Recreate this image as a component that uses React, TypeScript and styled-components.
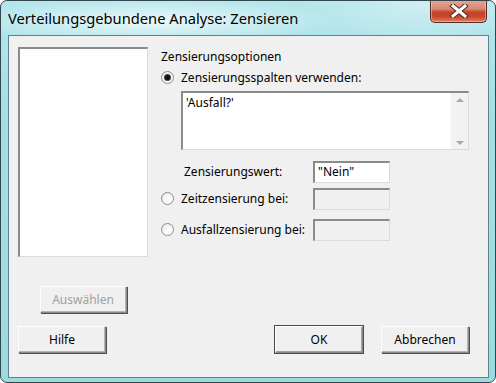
import * as React from 'react'
import styled, { createGlobalStyle } from 'styled-components'

const GlobalStyle = createGlobalStyle`
  html, body {
    margin: 0;
    padding: 0;
    background: #ffffff;
  }
  body {
    font-family: "Noto Sans", "Open Sans", sans-serif;
    font-size: 12px;
    color: #000;
  }
`

const Window = styled.div`
  width: 496px;
  height: 383px;
  box-sizing: border-box;
  border: 1px solid #33464c;
  border-radius: 7px;
  background: linear-gradient(180deg, #b4e6ec 0%, #a5dfe6 30%, #9adbe2 100%);
  display: flex;
  flex-direction: column;
  overflow: hidden;
`

const TitleBar = styled.div`
  height: 34px;
  display: flex;
  align-items: flex-start;
  padding-left: 7px;
  padding-right: 8px;
  background:
    radial-gradient(ellipse 190px 22px at 150px 20px, rgba(255, 255, 255, 0.75), rgba(255, 255, 255, 0) 100%),
    radial-gradient(ellipse 120px 40px at 420px 5px, rgba(255, 255, 255, 0.35), rgba(255, 255, 255, 0) 100%);
`

const Title = styled.div`
  flex: 1;
  font-size: 14.7px;
  line-height: 20px;
  margin-top: 7px;
  color: #000;
`

const CloseButton = styled.div`
  width: 57px;
  height: 23px;
  margin-top: -1px;
  box-sizing: border-box;
  border: 1px solid #5a2a24;
  border-top: none;
  border-radius: 0 0 5px 5px;
  background: linear-gradient(180deg, #e6a692 0%, #d88a74 40%, #c34328 55%, #c8472d 75%, #e08060 100%);
  box-shadow: inset 0 0 0 1px rgba(255, 220, 210, 0.45);
  display: flex;
  align-items: center;
  justify-content: center;
`

const Client = styled.div`
  flex: 1;
  margin: 0 6px 4px 7px;
  border: 1px solid #60808a;
  background: #f0f0f0;
  display: flex;
  flex-direction: column;
  padding: 11px 19px 0 9px;
`

const Main = styled.div`
  display: flex;
  gap: 13px;
`

const LeftColumn = styled.div`
  display: flex;
  flex-direction: column;
  align-items: center;
  width: 130px;
`

const ListBox = styled.div`
  width: 130px;
  height: 210px;
  box-sizing: border-box;
  background: #fff;
  border-top: 2px solid #8a8a8a;
  border-left: 2px solid #8a8a8a;
  border-right: 1px solid #dadada;
  border-bottom: 1px solid #dadada;
`

const Button = styled.div<{ $default?: boolean; $disabled?: boolean }>`
  width: 88px;
  height: 27px;
  box-sizing: border-box;
  display: flex;
  align-items: center;
  justify-content: center;
  background: #f0f0f0;
  color: ${p => (p.$disabled ? '#a0a0a0' : '#000')};
  border-top: 1px solid #fff;
  border-left: 1px solid #fff;
  border-right: 1px solid #8a8a8a;
  border-bottom: 1px solid #8a8a8a;
  box-shadow: ${p =>
    p.$default
      ? '0 0 0 1px #4a4a4a, inset -1px -1px 0 #a0a0a0'
      : '1px 1px 0 #505050, inset -1px -1px 0 #b4b4b4'};
`

const SelectButton = styled(Button)`
  width: 87px;
  margin-top: 29px;
`

const RightColumn = styled.div`
  flex: 1;
  display: flex;
  flex-direction: column;
`

const GroupLabel = styled.div`
  height: 17px;
  line-height: 17px;
  margin-top: 1px;
`

const OptionRow = styled.div<{ $height: number }>`
  display: flex;
  align-items: center;
  height: ${p => p.$height}px;
`

const Radio = styled.div<{ $checked?: boolean }>`
  width: 13px;
  height: 13px;
  box-sizing: border-box;
  border-radius: 50%;
  border: 1px solid #8e8f8f;
  background: radial-gradient(circle at 60% 60%, #ffffff 0%, #f4f4f4 55%, #d2d2d2 100%);
  display: flex;
  align-items: center;
  justify-content: center;
  margin-right: 7px;
  flex-shrink: 0;

  &::after {
    content: '';
    display: ${p => (p.$checked ? 'block' : 'none')};
    width: 5px;
    height: 5px;
    border-radius: 50%;
    background: #111;
    box-shadow: 0 0 0 1px #444;
  }
`

const Label = styled.span<{ $width?: number }>`
  display: inline-block;
  width: ${p => (p.$width ? `${p.$width}px` : 'auto')};
  white-space: nowrap;
`

const ColumnsBox = styled.div`
  margin: 2px 0 0 20px;
  height: 59px;
  box-sizing: border-box;
  background: #fff;
  border-top: 2px solid #8a8a8a;
  border-left: 2px solid #8a8a8a;
  border-right: 1px solid #dadada;
  border-bottom: 1px solid #dadada;
  display: flex;
`

const ColumnsText = styled.div`
  flex: 1;
  padding: 1px 0 0 3px;
`

const ScrollBar = styled.div`
  width: 17px;
  display: flex;
  flex-direction: column;
  justify-content: space-between;
  align-items: center;
  background: #f2f2f2;
  border-left: 1px solid #f8f8f8;
  padding: 5px 0 4px;
`

const Arrow = styled.div<{ $down?: boolean }>`
  width: 0;
  height: 0;
  border-left: 4px solid transparent;
  border-right: 4px solid transparent;
  ${p =>
    p.$down
      ? 'border-top: 4px solid #a8a8a8;'
      : 'border-bottom: 4px solid #a8a8a8;'}
`

const ValueRow = styled.div`
  display: flex;
  align-items: center;
  margin: 10px 0 0 23px;
  height: 23px;
`

const Field = styled.div<{ $disabled?: boolean }>`
  width: 77px;
  height: 22px;
  box-sizing: border-box;
  background: ${p => (p.$disabled ? '#f0f0f0' : '#fff')};
  border-top: 2px solid #8a8a8a;
  border-left: 2px solid #8a8a8a;
  border-right: 1px solid #dadada;
  border-bottom: 1px solid #dadada;
  padding: 0 0 0 3px;
  line-height: 18px;
`

const ButtonRow = styled.div`
  display: flex;
  align-items: center;
  margin-top: 13px;
`

const Spacer = styled.div`
  flex: 1;
`

const ButtonGap = styled.div`
  width: 18px;
`

const CloseGlyph = () => (
  <svg width="20" height="14" viewBox="0 0 20 14">
    <path
      d="M4 2 L16 12 M16 2 L4 12"
      stroke="#4a2a25"
      strokeWidth="5"
      strokeLinecap="square"
      fill="none"
    />
    <path
      d="M4 2 L16 12 M16 2 L4 12"
      stroke="#ffffff"
      strokeWidth="3"
      strokeLinecap="square"
      fill="none"
    />
  </svg>
)

export default function App() {
  return (
    <>
      <GlobalStyle />
      <Window>
        <TitleBar>
          <Title>Verteilungsgebundene Analyse: Zensieren</Title>
          <CloseButton>
            <CloseGlyph />
          </CloseButton>
        </TitleBar>
        <Client>
          <Main>
            <LeftColumn>
              <ListBox />
              <SelectButton $disabled>Auswählen</SelectButton>
            </LeftColumn>
            <RightColumn>
              <GroupLabel>Zensierungsoptionen</GroupLabel>
              <OptionRow $height={24}>
                <Radio $checked />
                <Label>Zensierungsspalten verwenden:</Label>
              </OptionRow>
              <ColumnsBox>
                <ColumnsText>'Ausfall?'</ColumnsText>
                <ScrollBar>
                  <Arrow />
                  <Arrow $down />
                </ScrollBar>
              </ColumnsBox>
              <ValueRow>
                <Label $width={129}>Zensierungswert:</Label>
                <Field>"Nein"</Field>
              </ValueRow>
              <OptionRow $height={31}>
                <Radio />
                <Label $width={132}>Zeitzensierung bei:</Label>
                <Field $disabled />
              </OptionRow>
              <OptionRow $height={31}>
                <Radio />
                <Label $width={132}>Ausfallzensierung bei:</Label>
                <Field $disabled />
              </OptionRow>
            </RightColumn>
          </Main>
          <ButtonRow>
            <Button>Hilfe</Button>
            <Spacer />
            <Button $default>OK</Button>
            <ButtonGap />
            <Button>Abbrechen</Button>
          </ButtonRow>
        </Client>
      </Window>
    </>
  )
}
